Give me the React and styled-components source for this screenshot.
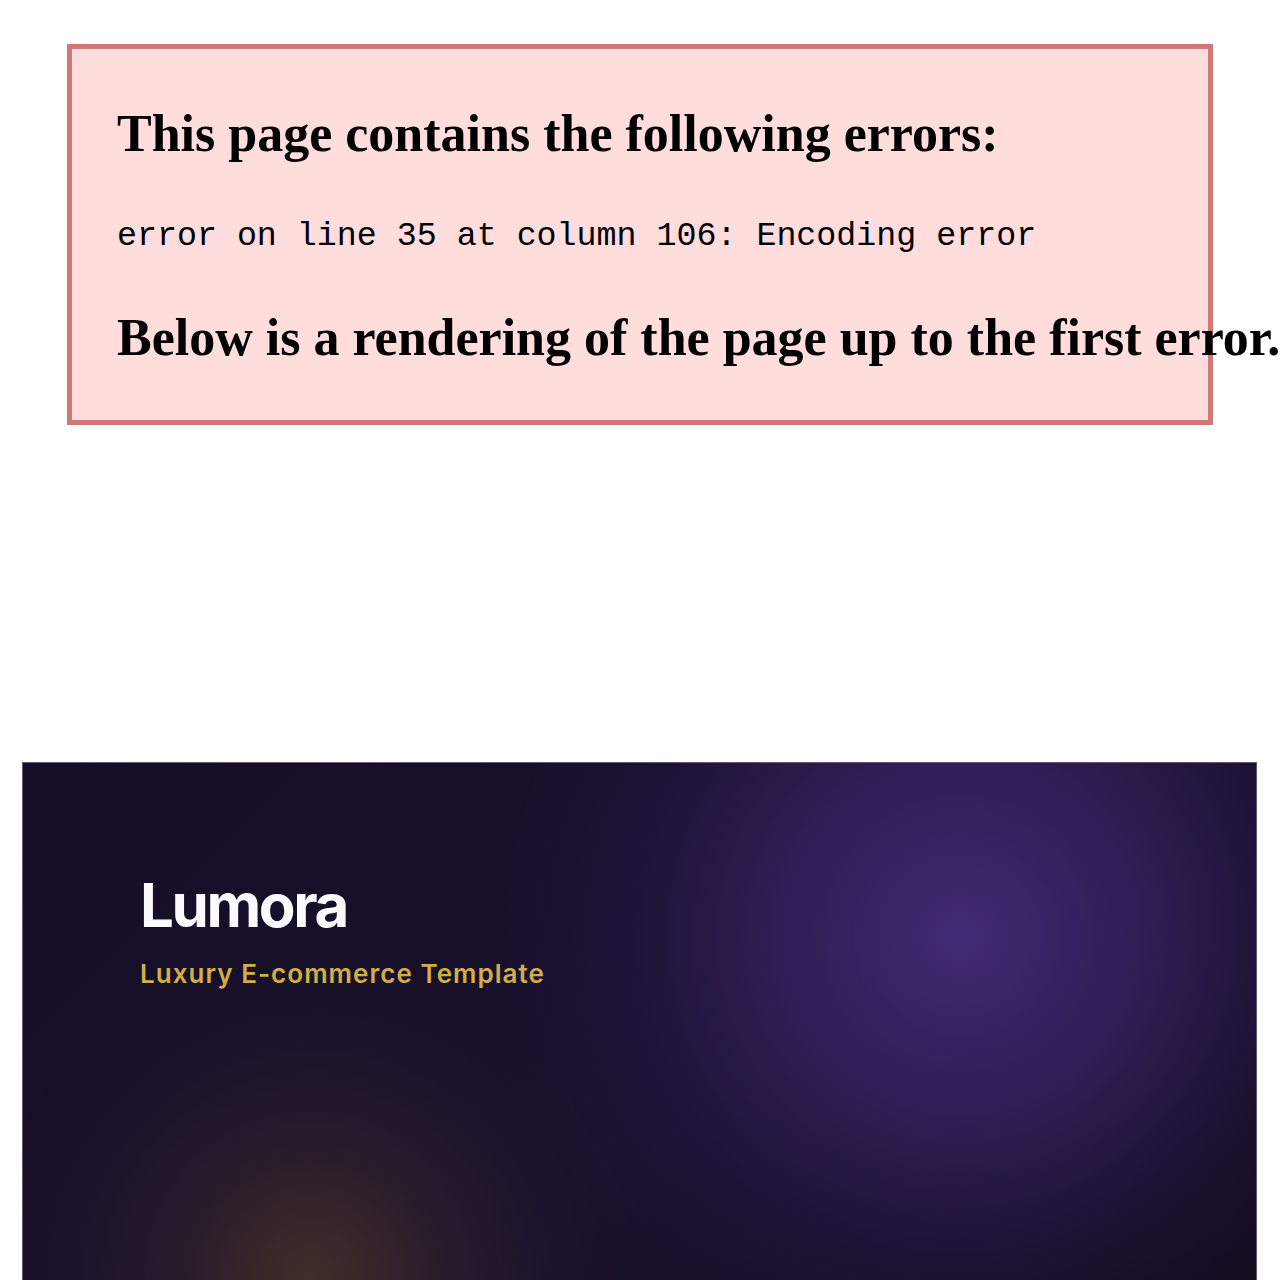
import styled, { createGlobalStyle } from 'styled-components';

const Global = createGlobalStyle`
    html, body {
        margin: 0;
        padding: 0;
        background: #ffffff;
        overflow: hidden;
    }
`;

const Page = styled.div`
    width: 1280px;
    padding-top: 44px;
`;

//Parser error box
const ErrorBox = styled.div`
    margin-left: 67px;
    box-sizing: border-box;
    width: 1146px;
    border: 5px solid #d07777;
    background: #ffdddd;
    padding: 55px 0 52px 45px;
    display: flex;
    flex-direction: column;
    gap: 52px;
    color: #000;
`;

const Heading = styled.h3`
    margin: 0;
    font-family: "Liberation Serif", "Times New Roman", serif;
    font-weight: 700;
    font-size: 52px;
    line-height: 60px;
    white-space: nowrap;
`;

const Message = styled.div`
    font-family: "Liberation Mono", "Courier New", monospace;
    font-size: 33.3px;
    line-height: 40px;
    white-space: pre;
`;

//Hero
const Hero = styled.section`
    margin: 337px 0 0 22px;
    width: 1235px;
    min-height: 620px;
    box-sizing: border-box;
    border: 1px solid rgba(190, 180, 220, 0.45);
    border-bottom: none;
    padding: 109px 0 0 117px;
    background:
        radial-gradient(circle at 288px 515px, rgba(74, 54, 40, 0.8) 0, rgba(58, 40, 44, 0.5) 130px, rgba(42, 28, 46, 0.25) 240px, rgba(40, 25, 45, 0) 340px),
        radial-gradient(ellipse 420px 420px at 938px 173px, #412a74 0, rgba(52, 32, 92, 0.85) 180px, rgba(40, 24, 70, 0.45) 330px, rgba(30, 20, 55, 0) 470px),
        linear-gradient(135deg, #150e27 0%, #17102b 55%, #0e0a18 100%);
`;

const Brand = styled.h1`
    margin: 0;
    font-family: Inter, "Noto Sans", sans-serif;
    font-weight: 700;
    font-size: 60px;
    line-height: 66px;
    letter-spacing: -0.04em;
    color: #fbfaff;
`;

const Tagline = styled.p`
    margin: 20px 0 0;
    font-family: Inter, "Noto Sans", sans-serif;
    font-weight: 600;
    font-size: 26px;
    line-height: 32px;
    letter-spacing: 0.04em;
    color: #d3ae45;
`;

const App = () => {
    return (
        <Page>
            <Global />
            <ErrorBox>
                <Heading>This page contains the following errors:</Heading>
                <Message>error on line 35 at column 106: Encoding error</Message>
                <Heading>Below is a rendering of the page up to the first error.</Heading>
            </ErrorBox>
            <Hero>
                <Brand>Lumora</Brand>
                <Tagline>Luxury E-commerce Template</Tagline>
            </Hero>
        </Page>
    );
}

export default App;
